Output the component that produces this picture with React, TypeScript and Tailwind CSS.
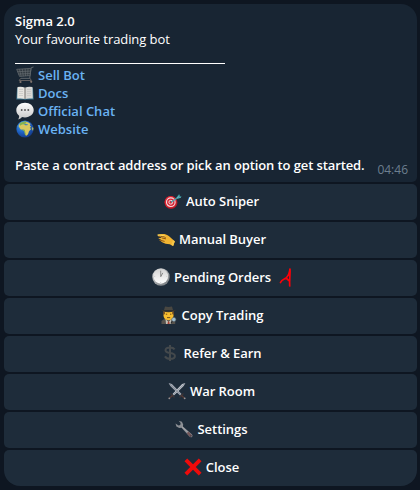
import type { ReactNode } from "react";

const Icon = ({ children }: { children: ReactNode }) => (
  <svg className="h-[18px] w-[18px] shrink-0" viewBox="0 0 18 18" fill="none">
    {children}
  </svg>
);

const CartIcon = () => (
  <Icon>
    <path d="M17.5 1l-2.3.7-1.5 10.6H5" stroke="#62686d" strokeWidth="1" />
    <path d="M.7 3.3l14.2-.9-1 7.3-10.4.7z" fill="#30383f" stroke="#62686d" strokeWidth=".8" />
    <path d="M3.5 3.3l1.6 7M6.3 3l1 7.2M9.2 2.8l.3 7.2M12 2.6l-.3 7.2M1.5 5.7l13-.6M2.5 8l11.7-.5" stroke="#6a7075" strokeWidth=".6" />
    <path d="M13.7 12l1.7 2.5H3.2l1.5-2.2" stroke="#6b6462" strokeWidth=".9" />
    <circle cx="4.5" cy="16" r="1.1" fill="#81746e" />
    <circle cx="15.2" cy="15.8" r="1.1" fill="#81746e" />
  </Icon>
);

const BookIcon = () => (
  <Icon>
    <path d="M1 4h16l.7 11.600H10L9 16l-1-.4H.3z" fill="#35718c" />
    <path d="M1.500 3Q6 2.200 9 3.800V15q-3-1-7.800-.4z" fill="#e6e4df" />
    <path d="M16.500 3Q12 2.200 9 3.800V15q3-1 7.800-.4z" fill="#d9d8d5" />
    <path d="M9 3.800V15" stroke="#77736f" strokeWidth="1" />
    <path d="M3 5.500h4M3 7.500h4M3 9.500h4M3 11.500h4M11 5.500h4M11 7.500h4M11 9.500h4M11 11.500h4" stroke="#b9b9b7" strokeWidth=".5" />
  </Icon>
);

const ChatIcon = () => (
  <Icon>
    <path d="M9 .7c5 0 8.700 3.100 8.700 7.400S14 15.400 9 15.400c-1.100 0-2.200-.2-3.100-.5-.9 1.300-2.100 2.100-3.800 2.500.9-1.200 1.200-2.300 1-3.600C1.300 12.500.3 10.500.3 8.100.3 3.800 4 .7 9 .7z" fill="url(#bubble)" />
    <g fill="#565656">
      <circle cx="5.700" cy="8" r=".95" />
      <circle cx="9" cy="8" r=".95" />
      <circle cx="12.300" cy="8" r=".95" />
    </g>
    <defs>
      <linearGradient id="bubble" x1="9" y1="0" x2="9" y2="17" gradientUnits="userSpaceOnUse">
        <stop stopColor="#fff" />
        <stop offset="1" stopColor="#c9c9c9" />
      </linearGradient>
    </defs>
  </Icon>
);

const GlobeIcon = () => (
  <Icon>
    <circle cx="9" cy="9" r="8.600" fill="url(#ocean)" />
    <path d="M2.500 6L4 3.300 6.500 2l3-.4 3 1L14.500 4l-.7 1.400 1.500 1.500-1.500.6 1.200 1.800-2 1.900-1 3-1.600 1.500-1.300-.7-.4-3.300-.9-2-3-.2-1.500-2z" fill="#d9c860" />
    <path d="M4 3.300L6.500 2l3-.4 1 1.500-2 1.200-2.500.2-2 1.200zM5.500 9.500l3.300.2.6 3 .9 2.300-1.500-.6-.4-3z" fill="#80b152" />
    <path d="M7.800 4.600l2-.7 2.400.5-1 .8-2 .1z" fill="#3d7fbd" />
    <path d="M16 7l1.500 1-.5 3-1.200-2z" fill="#b5b85c" />
    <defs>
      <radialGradient id="ocean" cx=".35" cy=".28" r=".75">
        <stop stopColor="#4ba8ea" />
        <stop offset=".55" stopColor="#1f63c4" />
        <stop offset="1" stopColor="#143a88" />
      </radialGradient>
    </defs>
  </Icon>
);

const TargetIcon = () => (
  <Icon>
    <circle cx="7" cy="10.500" r="6.500" fill="#a91d28" />
    <circle cx="6.600" cy="10" r="6" fill="#dc2433" />
    <circle cx="6.800" cy="10.200" r="4.300" fill="#d92737" stroke="#f1dfdf" strokeWidth="1.100" />
    <circle cx="6.800" cy="10.200" r="1.900" fill="#d92737" stroke="#f1dfdf" strokeWidth="1" />
    <path d="M7 10.200l8-5.400" stroke="#45a4ad" strokeWidth="1.300" />
    <path d="M12.200 5.900l2-3 1.200-1-.1 2.100 2.400.6-1.300 1.200-3.700.9z" fill="#378f99" />
    <path d="M13 6l2.800-2.500M13.500 6.200l3.300-.8" stroke="#6fc7cb" strokeWidth=".7" />
  </Icon>
);

const HandIcon = () => (
  <Icon>
    <path d="M.4 4.800c2.800-.9 6-1.100 8.500-.4 2.400.8 4.200 2.600 6 4.400l2.900 2.400-1.700 4.700-3.400-1.700c-2.800-.1-5.500-.7-7.500-2L2.300 10l2-.1L1.200 8l3.600-.2z" fill="#f2b532" />
    <path d="M.4 4.800c2.500-.5 5.600-.2 8.600 1.400L7.200 7.600 3.700 7 .9 6z" fill="#ffd75a" />
    <path d="M1.500 6.200c2.500.2 5 .2 7.200 1.200M2.600 10.100l5 1.300M4.800 7.900l4.200 1" stroke="#8f5613" strokeWidth="1" />
    <path d="M15.900 10.300l2 1-1.700 4.600-1.800-.9z" fill="#f7c64a" />
  </Icon>
);

const ClockIcon = () => (
  <Icon>
    <circle cx="9" cy="9" r="8.700" fill="url(#clockRim)" />
    <circle cx="8.800" cy="8.400" r="7.300" fill="url(#clockFace)" />
    <path d="M8.700 8.700V2.800" stroke="#858585" strokeWidth=".9" />
    <path d="M8.800 8.700l1.900-3.800" stroke="#777" strokeWidth=".9" />
    <path d="M8.700 1.800v1M8.700 14v1M2.200 8.400h1M14.300 8.400h1" stroke="#b3b3b3" strokeWidth=".6" />
    <defs>
      <linearGradient id="clockRim" x1="3" y1="1" x2="15" y2="17" gradientUnits="userSpaceOnUse">
        <stop stopColor="#dedede" />
        <stop offset="1" stopColor="#777c80" />
      </linearGradient>
      <linearGradient id="clockFace" x1="9" y1="1" x2="9" y2="16" gradientUnits="userSpaceOnUse">
        <stop stopColor="#d4d4d4" />
        <stop offset="1" stopColor="#fff" />
      </linearGradient>
    </defs>
  </Icon>
);

const DetectiveIcon = () => (
  <Icon>
    <path d="M1.500 18v-3l3-2.200h7.700l3 2.200v3z" fill="#57534d" />
    <path d="M5.500 12.700l3 3.300 3-3.300-.4 5.300H6z" fill="#c4c0b5" />
    <path d="M8 15.500h1.200l.5 2.500H7.500z" fill="#a83d32" />
    <path d="M3.500 5h10v4.500c0 2.700-2.200 4.700-5 4.700s-5-2-5-4.700z" fill="#f7bd2f" />
    <path d="M3 5.500h1.800V8L3.500 9zM12.300 5.500h1.800L13.500 9l-1.200-1z" fill="#634022" />
    <path d="M5.800 8.200h1.400M10 8.200h1.400M7 11.600h3.200" stroke="#654319" strokeWidth=".9" />
    <path d="M4 4L5 .5 8.500 1 12 .5 13 4z" fill="#494741" />
    <path d="M.8 3.800c5 1 10.500 1 15.500 0-.8 1.600-3.500 2.500-7.800 2.500S1.600 5.400.8 3.800z" fill="#37342f" />
    <circle cx="13.800" cy="13.500" r="2.100" fill="#9ebdcf" stroke="#5a6871" strokeWidth=".6" />
    <path d="M12.300 15.300l-1.500 2.200" stroke="#25282b" strokeWidth="1.100" />
  </Icon>
);

const DollarIcon = () => (
  <Icon>
    <path d="M13.600 5.400C12.700 4 11 3.400 9 3.400c-2.700 0-4.500 1-4.500 2.800 0 4.100 9.400 1.400 9.400 5.700 0 1.800-1.900 2.900-4.700 2.900-2.400 0-4.300-.8-5.300-2.400M9 1v16" stroke="#44494c" strokeWidth="2" />
  </Icon>
);

const SwordsIcon = () => (
  <Icon>
    <path d="M.6 1l3.300 1.100 9.600 10-1.400 1.300L2.300 4z" fill="#a7adb7" />
    <path d="M17.400 1l-3.300 1.100-9.600 10 1.400 1.300L15.700 4z" fill="#c0c5cc" />
    <path d="M1 1.300l11.700 11.500M17 1.300L5.300 12.800" stroke="#6f7580" strokeWidth=".6" />
    <path d="M2.500 11.500l4 4M11.500 15.500l4-4" stroke="#3b3435" strokeWidth="1.300" />
    <path d="M4.800 13.200l-3.400 3M13.200 13.200l3.400 3" stroke="#543a36" strokeWidth="1.400" />
    <circle cx="1.300" cy="16.300" r=".9" fill="#989394" />
    <circle cx="16.700" cy="16.300" r=".9" fill="#989394" />
  </Icon>
);

const WrenchIcon = () => (
  <Icon>
    <path d="M3.700.7L6.900 1.800l1.300 2.600-.3 2 8.900 7.900c.9.900.9 1.900.2 2.600s-1.700.6-2.500-.3L6.500 7.800l-2.200.1L1.400 6.500.5 3.400l3 2 1.800-.5.3-1.800z" fill="#8c8f95" />
    <path d="M7 6.800l8.500 8" stroke="#b4b3b6" strokeWidth=".8" />
    <path d="M12.600 12.300l3.700 4" stroke="#74575a" strokeWidth="2.500" />
    <circle cx="15.900" cy="15.900" r=".6" fill="#28313a" />
  </Icon>
);

const CrossIcon = () => (
  <Icon>
    <path d="M3.200.5L9 6.200 14.800.5l2.700 2.700L11.800 9l5.700 5.800-2.700 2.700L9 11.800l-5.800 5.700-2.700-2.700L6.200 9 .5 3.200z" fill="#ee0b0b" />
  </Icon>
);

// hand-drawn marker after "Pending Orders"
const Scribble = () => (
  <svg className="absolute top-1/2 left-full ml-[7px] h-6 w-4 -translate-y-1/2" viewBox="0 0 16 24" fill="none">
    <path d="M2.500 17.500c1-2.800 3-3.200 5.500-4.500 2.200-2.200 3.700-5.500 3.900-9M8 13l3.500 3.200M12 4c.4 5-.8 11-.3 17" stroke="#fb0008" strokeWidth="1.700" strokeLinecap="round" />
  </svg>
);

const links = [
  { title: "Sell Bot", icon: <CartIcon /> },
  { title: "Docs", icon: <BookIcon /> },
  { title: "Official Chat", icon: <ChatIcon /> },
  { title: "Website", icon: <GlobeIcon /> },
];

const actions = [
  { title: "Auto Sniper", icon: <TargetIcon /> },
  { title: "Manual Buyer", icon: <HandIcon /> },
  { title: "Pending Orders", icon: <ClockIcon />, marked: true },
  { title: "Copy Trading", icon: <DetectiveIcon /> },
  { title: "Refer & Earn", icon: <DollarIcon /> },
  { title: "War Room", icon: <SwordsIcon /> },
  { title: "Settings", icon: <WrenchIcon /> },
  { title: "Close", icon: <CrossIcon /> },
];

export default function App() {
  return (
    <div className="flex h-[490px] w-[420px] flex-col gap-0.5 bg-[#0e1621] pt-1 pr-[3px] pl-1 font-['Open_Sans',sans-serif] text-[13px] leading-[18px] text-white">
      <div className="flex h-[178px] items-end justify-between rounded-t-2xl rounded-b-[5px] bg-[#182533] pr-[9px] pl-[11px]">
        <div className="h-[170px] whitespace-nowrap">
          <div className="font-semibold">Sigma 2.0</div>
          <div className="tracking-[-0.08px]">Your favourite trading bot</div>
          <div className="flex h-[18px] items-end pb-[2px]">
            <div className="h-px w-[210px] bg-white" />
          </div>
          {links.map(link => (
            <div key={link.title} className="flex gap-[4px] pl-px font-semibold text-[#6ab3f3]">
              {link.icon}
              <a>{link.title}</a>
            </div>
          ))}
          <div className="mt-[18px] font-semibold tracking-[-0.105px]">
            Paste a contract address or pick an option to get started.
          </div>
        </div>
        <span className="pb-[3px] text-xs leading-[18px] text-[#6d7f8f]">04:46</span>
      </div>
      {actions.map(action => (
        <button
          key={action.title}
          className="flex h-9 shrink-0 items-center justify-center rounded-[5px] bg-[#1e2c3a] pb-0.5 pl-0.5 font-semibold last:rounded-b-2xl"
        >
          <span className="relative flex gap-[4px] tracking-[-0.04px]">
            {action.icon}
            {action.title}
            {action.marked ? <Scribble /> : null}
          </span>
        </button>
      ))}
    </div>
  );
}
